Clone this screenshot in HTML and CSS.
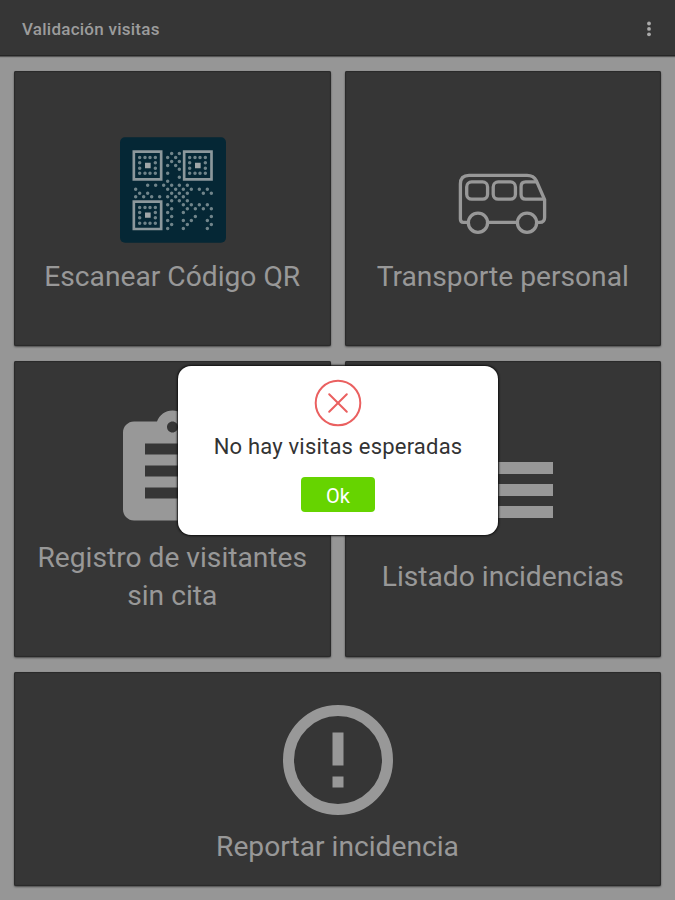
FILE: index.html
```html
<!DOCTYPE html>
<html lang="es">
<head>
  <meta charset="UTF-8">
  <meta name="viewport" content="width=device-width, initial-scale=1.0">
  <title>Validación visitas</title>
  <link rel="stylesheet" href="styles.css">
</head>
<body>
  <div id="wrapper">
    <header>
      <h1>Validación visitas</h1>
      <svg class="more" viewBox="0 0 6 16"><circle cx="3" cy="2.500" r="1.900"/><circle cx="3" cy="7.900" r="1.900"/><circle cx="3" cy="13.300" r="1.900"/></svg>
    </header>
    <main>
      <div class="card qr">
        <svg class="icon-qr" viewBox="30 34 318 317">
          <rect class="tile" x="30" y="34" width="318" height="317" rx="15"/>
          <path class="finder" d="M71.5 77.500h82v83h-82zM222.500 77.500h82v83h-82zM71.500 227.500h82v82h-82z"/>
          <path class="center" d="M105 111h17v16h-17zM255 111h17v16h-17zM105 260h17v16h-17z"/>
          <path class="dots" d="M89 95h0M105 95h0M120 95h0M136 95h0M89 111h0M136 111h0M89 127h0M136 127h0M89 142h0M105 142h0M120 142h0M136 142h0
            M239 95h0M255 95h0M270 95h0M286 95h0M239 111h0M286 111h0M239 127h0M286 127h0M239 142h0M255 142h0M270 142h0M286 142h0
            M89 245h0M105 245h0M120 245h0M136 245h0M89 260h0M136 260h0M89 276h0M136 276h0M89 292h0M105 292h0M120 292h0M136 292h0
            M185 83h0M208 83h0M173 95h0M197 95h0M185 107h0M208 107h0M173 119h0M197 119h0M208 130h0M173 142h0M208 154h0M173 166h0
            M113 178h0M137 178h0M161 178h0M185 178h0M208 178h0M232 178h0
            M77 190h0M173 190h0M197 190h0M220 190h0M244 190h0M268 190h0M292 190h0
            M89 202h0M113 202h0M185 202h0M208 202h0M232 202h0M280 202h0M304 202h0
            M77 213h0M101 213h0M125 213h0M149 213h0M173 213h0M197 213h0M220 213h0
            M185 225h0M208 225h0M232 225h0M173 237h0M220 237h0M244 237h0M268 237h0M292 237h0
            M185 249h0M232 249h0M256 249h0M280 249h0M304 249h0M173 260h0M220 260h0M185 272h0M256 272h0M304 272h0
            M173 284h0M220 284h0M244 284h0M292 284h0M185 296h0M232 296h0M304 296h0M173 308h0M220 308h0M292 308h0"/>
        </svg>
        <p>Escanear Código QR</p>
      </div>
      <div class="card bus">
        <svg class="icon-bus" viewBox="57 68 266 184">
          <path d="M87 217H72q-9 0-9-10V101Q63 75 89 75H264Q284 75 292 91L317 148V202Q317 217 302 217H294M146 217H234"/>
          <rect x="82" y="95" width="63" height="52" rx="15"/>
          <rect x="162" y="95" width="67" height="52" rx="15"/>
          <path d="M293 95H260Q246 95 246 109V133Q246 147 260 147H316"/>
          <circle cx="116" cy="218" r="29"/>
          <circle cx="264" cy="218" r="29"/>
        </svg>
        <p>Transporte personal</p>
      </div>
      <div class="card registro">
        <svg class="icon-clip" viewBox="3 1 18 20">
          <path d="M19 3h-4.180C14.400 1.840 13.300 1 12 1s-2.400.840-2.820 2H5c-1.100 0-2 .9-2 2v14c0 1.100.9 2 2 2h14c1.100 0 2-.9 2-2V5c0-1.100-.9-2-2-2zm-7 0c.550 0 1 .450 1 1s-.450 1-1 1-1-.450-1-1 .450-1 1-1zm5 6H7V7h10v2zm0 4H7v-2h10v2zm0 4H7v-2h10v2z"/>
        </svg>
        <p>Registro de visitantes<br>sin cita</p>
      </div>
      <div class="card listado">
        <svg class="icon-list" viewBox="0 0 100 56"><path d="M0 0h100v12H0zM0 22h100v12H0zM0 44h100v12H0z"/></svg>
        <p>Listado incidencias</p>
      </div>
      <div class="card reportar">
        <svg class="icon-alert" viewBox="2 2 20 20">
          <circle cx="12" cy="12" r="9"/>
          <path d="M11 7h2v6h-2zM11 15h2v2h-2z"/>
        </svg>
        <p>Reportar incidencia</p>
      </div>
    </main>
  </div>

  <div id="dialog">
    <svg class="icon-error" viewBox="0 0 48 48">
      <circle cx="24" cy="24" r="22.300"/>
      <path d="M15.200 15.200l17.600 17.600M32.800 15.200L15.200 32.800"/>
    </svg>
    <p>No hay visitas esperadas</p>
    <button>Ok</button>
  </div>
</body>
</html>
```
FILE: styles.css
```css
html,body {
  margin: 0;
  padding: 0;
  overflow: hidden;
}
body {
  font-family: Roboto, "Liberation Sans", sans-serif;
  background-color: #969696;
}
#wrapper {
  height: 100vh;
  display: grid;
  grid-template-rows: 56px 1fr;
}
header {
  display: flex;
  align-items: center;
  justify-content: space-between;
  padding: 2px 23px 0 22px;
  background-color: #363636;
  box-shadow: inset 0 -1px 0 #262626, 0 1px 1px #555;
}
h1 {
  margin: 0;
  font-size: 17px;
  font-weight: 500;
  letter-spacing: 0.25px;
  color: #9c9c9c;
}
.more {
  width: 6px;
  height: 16px;
  fill: #aaa;
}
main {
  display: grid;
  grid-template-columns: 1fr 1fr;
  grid-template-rows: 275px 296px 214px;
  gap: 15px 14px;
  padding: 15px 14px 0;
}
.card {
  display: flex;
  flex-direction: column;
  align-items: center;
  box-sizing: border-box;
  border-radius: 2px;
  background-color: #363636;
  box-shadow: inset 0 0 1px 1px #2a2a2a, 0 1px 2px #4a4a4a;
  text-align: center;
}
.card p {
  margin: 0;
  font-size: 28.2px;
  line-height: 38px;
  color: #989898;
  white-space: nowrap;
}
.card svg {
  flex: none;
  fill: #989898;
}
.qr {
  padding-top: 66px;
}
.bus {
  padding-top: 102px;
}
.registro {
  padding-top: 49px;
}
.listado {
  padding-top: 101px;
}
.reportar {
  grid-column: 1 / 3;
  padding-top: 33px;
}

.icon-qr {
  width: 106px;
  height: 106px;
  margin: 0 0 15px 1px;
}
.icon-qr .tile {
  fill: #052735;
}
.icon-qr .finder {
  fill: none;
  stroke: #8c989c;
  stroke-width: 8;
}
.icon-qr .center {
  fill: #a0a6a8;
}
.icon-qr .dots {
  stroke: #70848a;
  stroke-width: 10.5;
  stroke-linecap: round;
}
.card .icon-bus {
  width: 89px;
  height: 61px;
  margin-bottom: 24px;
  fill: none;
  stroke: #989898;
  stroke-width: 10;
}
.bus circle {
  fill: #363636;
}
.icon-clip {
  width: 99px;
  height: 111px;
  margin: 0 0 18px 1px;
}
.icon-list {
  width: 100px;
  height: 56px;
  margin: 0 0 40px 1px;
}
.icon-alert {
  width: 110px;
  height: 110px;
  margin-bottom: 13px;
}
.icon-alert circle {
  fill: none;
  stroke: #989898;
  stroke-width: 2;
}

#dialog {
  position: absolute;
  top: 366px;
  left: 178px;
  width: 320px;
  height: 169px;
  box-sizing: border-box;
  padding-top: 13px;
  display: flex;
  flex-direction: column;
  align-items: center;
  border-radius: 13px;
  background-color: #fff;
  box-shadow: 0 0 2px 1px #111;
}
.icon-error {
  width: 48px;
  height: 48px;
  fill: none;
  stroke: #ea6060;
  stroke-width: 2;
  stroke-linecap: round;
}
#dialog p {
  margin: 5px 0 0;
  font-size: 22px;
  line-height: 30px;
  letter-spacing: 0.2px;
  color: #333;
  white-space: nowrap;
}
#dialog button {
  width: 74px;
  height: 35px;
  margin-top: 15px;
  padding: 2px 0 0;
  border: none;
  border-radius: 4px;
  background-color: #66d400;
  color: #fff;
  font-family: inherit;
  font-size: 20px;
}
```
